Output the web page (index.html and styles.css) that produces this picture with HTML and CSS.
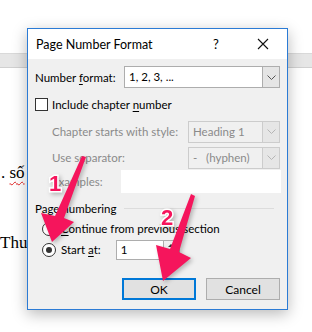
FILE: index.html
```html
<!DOCTYPE html>
<html lang="en">
<head>
    <meta charset="UTF-8">
    <link rel="stylesheet" href="styles.css">
</head>
<body>
    <!-- document behind the dialog -->
    <div class="doc">
        <div class="ruler"></div>
        <p class="doc-line line-so">. <span class="squiggle">số</span></p>
        <p class="doc-line line-thu">Thu</p>
    </div>

    <!-- dialog -->
    <div class="dialog">
        <div class="titlebar">
            <span class="title">Page Number Format</span>
            <span class="help">?</span>
            <span class="close">
                <svg width="12" height="12" viewBox="0 0 12 12"><path d="M1 1L11 11M11 1L1 11" stroke="#111" stroke-width="1.1"/></svg>
            </span>
        </div>
        <div class="body">
            <div class="row row-format">
                <label class="lbl">Number <u>f</u>ormat:</label>
                <div class="select sel-format">
                    <span class="sel-text">1, 2, 3, ...</span>
                    <span class="sel-btn"><svg width="9" height="5" viewBox="0 0 9 5"><path d="M0.5 0.5L4.5 4.5L8.5 0.5" fill="none" stroke="#555"/></svg></span>
                </div>
            </div>
            <div class="row row-check">
                <span class="checkbox"></span>
                <span>Include chapter <u>n</u>umber</span>
            </div>
            <div class="row row-sub">
                <span class="lbl dim">Chapter starts with style:</span>
                <div class="select sel-dim">
                    <span class="sel-text">Heading 1</span>
                    <span class="sel-btn"><svg width="9" height="5" viewBox="0 0 9 5"><path d="M0.5 0.5L4.5 4.5L8.5 0.5" fill="none" stroke="#b5b5b5"/></svg></span>
                </div>
            </div>
            <div class="row row-sub row-sep">
                <span class="lbl dim">Use separator:</span>
                <div class="select sel-dim">
                    <span class="sel-text">-&nbsp;&nbsp;&nbsp;(hyphen)</span>
                    <span class="sel-btn"><svg width="9" height="5" viewBox="0 0 9 5"><path d="M0.5 0.5L4.5 4.5L8.5 0.5" fill="none" stroke="#b5b5b5"/></svg></span>
                </div>
            </div>
            <div class="row row-examples">
                <span class="lbl dim">Examples:</span>
                <div class="examples-box"></div>
            </div>
            <div class="group-head">
                <span>Page numbering</span>
                <span class="group-line"></span>
            </div>
            <div class="row row-radio">
                <span class="radio"></span>
                <span><u>C</u>ontinue from previous section</span>
            </div>
            <div class="row row-radio row-start">
                <span class="radio checked"></span>
                <span class="start-lbl">Start <u>a</u>t:</span>
                <div class="spin">
                    <span class="spin-text">1</span>
                    <span class="spin-btns">
                        <span class="spin-up"></span>
                        <span class="spin-down"></span>
                    </span>
                </div>
            </div>
            <div class="buttons">
                <button class="btn btn-ok">OK</button>
                <button class="btn">Cancel</button>
            </div>
        </div>
    </div>

    <!-- annotation arrows -->
    <svg class="marks" width="312" height="332" viewBox="0 0 312 332">
        <polygon points="82,156 86,157 64,218 74,222 52,242 41,213 55,216" fill="#f5155c"/>
        <polygon points="191,194 195,196 179,252 191,258 163,281 156,245 170,249" fill="#f5155c"/>
        <text x="49" y="191" class="num">1</text>
        <text x="161" y="225" class="num">2</text>
    </svg>
</body>
</html>
```

FILE: styles.css
```css
body {
    margin: 0;
    width: 312px;
    height: 332px;
    overflow: hidden;
    position: relative;
    background: #ffffff;
    font-family: Lato, "Noto Sans", sans-serif;
    font-size: 11.5px;
    color: #000;
}

/* document behind */
.doc {
    padding-top: 53px;
}

.ruler {
    height: 13px;
    background: #e6e6e6;
    border-top: 1px solid #d9d9d9;
    border-bottom: 1px solid #d0d0d0;
}

.doc-line {
    margin: 0;
    font-family: "Liberation Serif", serif;
    font-size: 17px;
    line-height: 20px;
}

.line-so {
    margin-top: 95px;
    margin-left: 1px;
}

.squiggle {
    text-decoration: underline wavy #e02020;
    text-decoration-thickness: 1px;
    text-underline-offset: 3px;
}

.line-thu {
    margin-top: 50px;
}

/* dialog */
.dialog {
    position: absolute;
    left: 27px;
    top: 28px;
    width: 259px;
    height: 280px;
    border: 1px solid #2b7bd5;
    background: #f0f0f0;
    box-shadow: 0 4px 14px rgba(0, 0, 0, 0.28);
}

.titlebar {
    height: 30px;
    background: #ffffff;
    display: flex;
    align-items: center;
    padding-left: 8px;
}

.title {
    flex: 1;
    font-size: 12.5px;
}

.help {
    width: 14px;
    font-size: 13px;
    margin-right: 30px;
}

.close {
    width: 12px;
    margin-right: 18px;
    display: flex;
}

.body {
    padding: 7px 6px 0 7px;
}

.row {
    display: flex;
    align-items: center;
}

.lbl {
    white-space: nowrap;
}

.dim {
    color: #8a8a8a;
}

u {
    text-decoration-thickness: 1px;
    text-underline-offset: 2px;
}

.row-format {
    height: 22px;
    justify-content: space-between;
    padding-right: 1px;
}

.select {
    display: flex;
    height: 20px;
    border: 1px solid #adadad;
    background: #fff;
}

.sel-format {
    width: 154px;
}

.sel-text {
    flex: 1;
    padding-left: 4px;
    line-height: 20px;
}

.sel-btn {
    width: 16px;
    background: #e5e5e5;
    border-left: 1px solid #adadad;
    display: flex;
    align-items: center;
    justify-content: center;
}

.row-check {
    margin-top: 9px;
    height: 14px;
}

.checkbox {
    width: 11px;
    height: 11px;
    border: 1px solid #333;
    background: #fff;
    margin-right: 4px;
}

.row-sub {
    margin-top: 9px;
    height: 23px;
    padding-left: 17px;
    padding-right: 1px;
    justify-content: space-between;
}

.row-sep {
    margin-top: 3px;
}

.sel-dim {
    width: 90px;
    background: #f0f0f0;
    border-color: #cccccc;
    color: #8a8a8a;
}

.sel-dim .sel-btn {
    background: #e6e6e6;
    border-left-color: #cccccc;
}

.row-examples {
    margin-top: 1px;
    height: 23px;
    padding-left: 17px;
}

.examples-box {
    margin-left: 18px;
    width: 163px;
    height: 23px;
    background: #fff;
}

.group-head {
    margin-top: 8px;
    display: flex;
    align-items: center;
    height: 14px;
    padding-right: 7px;
}

.group-line {
    flex: 1;
    margin-left: 8px;
    height: 1px;
    background: #dcdcdc;
}

.row-radio {
    margin-top: 6px;
    height: 15px;
    padding-left: 7px;
}

.radio {
    width: 12px;
    height: 12px;
    border: 1px solid #333;
    border-radius: 50%;
    background: #fff;
    margin-right: 5px;
    position: relative;
}

.radio.checked::after {
    content: "";
    position: absolute;
    left: 3px;
    top: 3px;
    width: 6px;
    height: 6px;
    border-radius: 50%;
    background: #333;
}

.row-start {
    margin-top: 6px;
}

.start-lbl {
    margin-right: 15px;
}

.spin {
    width: 62px;
    height: 18px;
    border: 1px solid #adadad;
    background: #fff;
    display: flex;
}

.spin-text {
    flex: 1;
    padding-left: 4px;
    line-height: 18px;
}

.spin-btns {
    width: 15px;
    border-left: 1px solid #adadad;
    background: #f0f0f0;
    display: flex;
    flex-direction: column;
    align-items: center;
    justify-content: space-around;
}

.spin-up {
    border-left: 3px solid transparent;
    border-right: 3px solid transparent;
    border-bottom: 3px solid #333;
}

.spin-down {
    border-left: 3px solid transparent;
    border-right: 3px solid transparent;
    border-top: 3px solid #333;
}

.buttons {
    margin-top: 21px;
    display: flex;
    gap: 10px;
    padding-left: 87px;
}

.btn {
    width: 74px;
    height: 22px;
    border: 1px solid #adadad;
    background: #e1e1e1;
    font-family: Lato, "Noto Sans", sans-serif;
    font-size: 12px;
    padding: 0;
    color: #000;
}

.btn-ok {
    border: 2px solid #0078d7;
}

/* annotations */
.marks {
    position: absolute;
    left: 0;
    top: 0;
    filter: drop-shadow(2px 2px 2px rgba(0, 0, 0, 0.25));
}

.num {
    font-family: "Liberation Sans", sans-serif;
    font-weight: bold;
    font-size: 22px;
    fill: #f5155c;
    stroke: #fff;
    stroke-width: 3px;
    paint-order: stroke;
}
```
